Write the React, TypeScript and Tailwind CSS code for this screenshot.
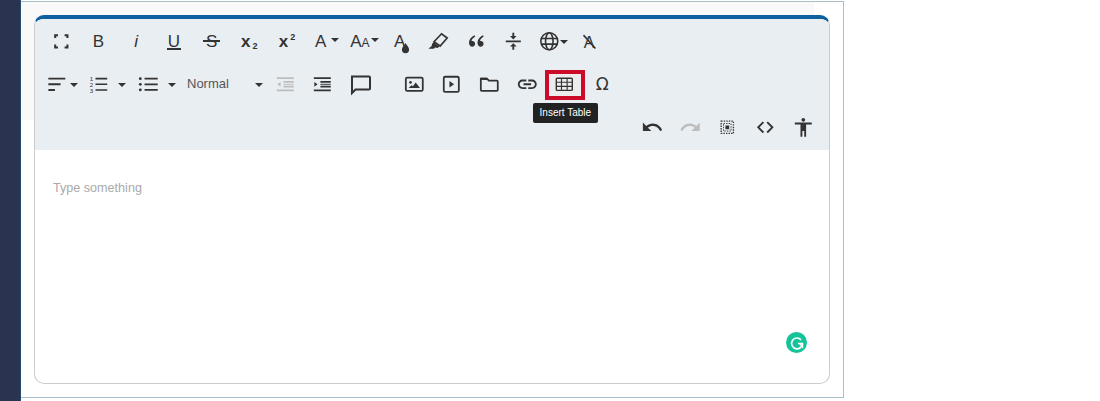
const dark = "#333333";
const off = "#bdbdbd";

function Icon({ children, color = dark }: { children: React.ReactNode; color?: string }) {
  return (
    <svg viewBox="0 0 24 24" fill={color} stroke="none" className="w-[22.6px] h-[22.6px] shrink-0" style={{ color }}>
      {children}
    </svg>
  );
}

function Caret({ className = "" }: { className?: string }) {
  return (
    <svg viewBox="0 0 8 4" fill="#333333" className={"w-[8px] h-[4px] shrink-0 " + className}>
      <path d="M0 0h8L4 4z" />
    </svg>
  );
}

function Btn({ children }: { children: React.ReactNode }) {
  return <div className="w-[37.7px] h-[38px] flex items-center justify-center shrink-0 text-[#333]">{children}</div>;
}

function Lines({ d, color = dark, width = 1.8 }: { d: string; color?: string; width?: number }) {
  return <path d={d} fill="none" stroke={color} strokeWidth={width} />;
}

function IndentIcon({ color, out }: { color: string; out?: boolean }) {
  return (
    <Icon color={color}>
      <Lines color={color} d="M3 5.5h18M10 9.5h11M10 14.5h11M3 18.5h18" />
      <Lines color={color} width={1} d="M10 12h11" />
      <path d={out ? "M7 9.5v5L3.5 12z" : "M3.5 9.5v5L7 12z"} fill={color} />
    </Icon>
  );
}

export default function App() {
  return (
    <div className="flex h-[401px] w-[1100px] bg-white overflow-hidden font-['Liberation_Sans',Arial,sans-serif]">
      <div className="w-[21px] h-full bg-[#2a3350] border-r border-[#284a6e]" />
      <div className="pt-px">
        <div className="relative w-[823px] h-[397px] border border-l-0 border-[#a9bfce] pl-[13px] pt-[13px] bg-[linear-gradient(#f9f9f9,#f9f9f9)] bg-no-repeat bg-[length:793px_118px]">
          <div className="w-[796px] h-[369px] rounded-[10px] border-x border-b border-[#cccccc] bg-white overflow-hidden border-t-4 border-t-[#0e619f] flex flex-col">
            <div className="h-[131px] bg-[#e9eef2] shrink-0 pt-[1px]">
              {/* row 1 */}
              <div className="h-[43px] flex items-center pl-[7px]">
                <Btn>
                  <Icon>
                    <Lines width={2.2} d="M5.5 8.5v-3h3M15.5 5.5h3v3M18.5 15.500v3h-3M8.500 18.500h-3v-3" />
                  </Icon>
                </Btn>
                <Btn><span className="text-[17px] leading-none">B</span></Btn>
                <Btn><span className="text-[17px] leading-none italic">i</span></Btn>
                <Btn>
                  <span className="text-[17px] leading-[15px] h-[16px] border-b-2 border-[#333] px-px">U</span>
                </Btn>
                <Btn>
                  <div className="relative w-[17px] h-[17px] flex items-center justify-center">
                    <span className="text-[17px] leading-none">S</span>
                    <div className="absolute left-0 right-0 top-[7px] h-[2px] bg-[#333]" />
                  </div>
                </Btn>
                <Btn>
                  <span className="text-[17px] leading-none font-bold">x</span>
                  <span className="text-[9px] font-bold leading-none mt-[9px] ml-[2px]">2</span>
                </Btn>
                <Btn>
                  <span className="text-[17px] leading-none font-bold">x</span>
                  <span className="text-[9px] font-bold leading-none mb-[9px] ml-[2px]">2</span>
                </Btn>
                <Btn>
                  <span className="text-[17px] leading-none ml-[5px]">A</span>
                  <Caret className="ml-[5px] mb-[3px]" />
                </Btn>
                <Btn>
                  <span className="text-[17px] leading-none ml-[4px]">A</span>
                  <span className="text-[12px] leading-none mt-[3px]">A</span>
                  <Caret className="ml-px mb-[3px] w-[6px]" />
                </Btn>
                <Btn>
                  <div className="relative w-[22px] h-[22px] flex items-center">
                    <span className="text-[17px] leading-none ml-[5px]">A</span>
                    <svg viewBox="0 0 10 12" fill="#333333" className="absolute left-[12px] top-[12px] w-[9px] h-[11px]">
                      <path d="M5 0c1 2 4 4.500 4 7.200A4 4 0 0 1 1 7.200C1 4.500 4 2 5 0z" />
                    </svg>
                  </div>
                </Btn>
                <Btn>
                  <Icon>
                    <Lines width={1.800} d="M8.500 12.500 16.500 4l6 4.500-7.500 8.500z" />
                    <path d="M8 13l6 4.500-1.500 1.500-3-.5-1 1.500H2.500l3.500-3 .5-2.500z" />
                  </Icon>
                </Btn>
                <Btn>
                  <Icon>
                    <path d="M11 5.500 12 7c-2 1.200-3.600 2.600-4 4.800.4-.1.700-.1 1-.1 1.500 0 2.800 1.200 2.800 2.900 0 1.800-1.300 3.100-3 3.100-2.200 0-3.500-1.700-3.500-4.200 0-3.400 2.200-6.100 5.700-8zM20 5.500 21 7c-2 1.200-3.600 2.600-4 4.800.4-.1.700-.1 1-.1 1.500 0 2.800 1.200 2.800 2.900 0 1.800-1.300 3.100-3 3.100-2.200 0-3.500-1.700-3.500-4.200 0-3.400 2.200-6.100 5.700-8z" />
                  </Icon>
                </Btn>
                <Btn>
                  <Icon>
                    <Lines width={1.800} d="M4 12h16" />
                    <path d="M11 3h2v3.500h2.500L12 10 8.500 6.500H11zM12 14l3.500 3.500H13V21h-2v-3.500H8.500z" />
                  </Icon>
                </Btn>
                <Btn>
                  <div className="flex items-center ml-[4px]">
                    <Icon>
                      <g fill="none" stroke="#333333" strokeWidth="1.700">
                        <circle cx="12" cy="12" r="9" />
                        <ellipse cx="12" cy="12" rx="4" ry="9" />
                        <path d="M3.500 9h17M3.500 15h17" />
                      </g>
                    </Icon>
                    <Caret className="-ml-[1px] w-[7px]" />
                  </div>
                </Btn>
                <Btn>
                  <div className="relative w-[22px] h-[22px] flex items-center justify-center ml-[1px]">
                    <span className="text-[16px] leading-none mt-[3px]">A</span>
                    <svg viewBox="0 0 24 24" className="absolute inset-0 w-[22px] h-[22px]">
                      <Lines width={1.700} d="M6 4.500 19 19" />
                    </svg>
                  </div>
                </Btn>
              </div>
              {/* row 2 */}
              <div className="h-[43px] flex items-center pl-[7px]">
                <div className="w-[42px] flex items-center pl-[4px] shrink-0">
                  <Icon>
                    <Lines width={2} d="M2.500 6h18M2.500 12h13M2.500 18h7" />
                  </Icon>
                  <Caret className="ml-[1.500px] w-[7px]" />
                </div>
                <div className="w-[48px] flex items-center pl-[3px] shrink-0">
                  <Icon>
                    <Lines width={1.700} d="M9 6h12.500M9 12h12.500M9 18h12.500" />
                    <g fill="#333333" fontSize="6.500" fontFamily="Liberation Sans">
                      <text x="3" y="8">1</text>
                      <text x="3" y="14.500">2</text>
                      <text x="3" y="21">3</text>
                    </g>
                  </Icon>
                  <Caret className="ml-[8px]" />
                </div>
                <div className="w-[48px] flex items-center pl-[5px] shrink-0">
                  <Icon>
                    <Lines width={1.900} d="M8 6h14M8 12h14M8 18h14" />
                    <circle cx="3.500" cy="6" r="1.500" />
                    <circle cx="3.500" cy="12" r="1.500" />
                    <circle cx="3.500" cy="18" r="1.500" />
                  </Icon>
                  <Caret className="ml-[8px]" />
                </div>
                <div className="w-[86px] flex items-center justify-between pl-[7px] pr-[3px] shrink-0">
                  <span className="text-[13px] leading-none text-[#555] mb-[2px]">Normal</span>
                  <Caret />
                </div>
                <Btn><IndentIcon color={off} out /></Btn>
                <Btn><IndentIcon color={dark} /></Btn>
                <Btn>
                  <svg viewBox="0 0 24 24" className="w-[24px] h-[24px]">
                    <Lines width={2} d="M4 3.500h17a1 1 0 0 1 1 1v11a1 1 0 0 1-1 1H7.500L4 20z" />
                  </svg>
                </Btn>
                <div className="w-[16px] shrink-0" />
                <Btn>
                  <Icon>
                    <rect x="3" y="5" width="18" height="14" rx="1.500" fill="none" stroke="#333333" strokeWidth="1.900" />
                    <circle cx="8" cy="10" r="1.400" />
                    <path d="M6 16l3-3 1.500 1 3-4 4.500 6z" />
                  </Icon>
                </Btn>
                <Btn>
                  <Icon>
                    <rect x="4" y="4" width="16" height="16" rx="1.500" fill="none" stroke="#333333" strokeWidth="1.900" />
                    <path d="M10 8.500v7l5-3.500z" />
                  </Icon>
                </Btn>
                <Btn>
                  <Icon>
                    <Lines width={1.900} d="M3 6h6.500l2 2H20a1 1 0 0 1 1 1v9a1 1 0 0 1-1 1H4a1 1 0 0 1-1-1z" />
                    <path d="M3 5h6.500l2 2.500H3z" />
                  </Icon>
                </Btn>
                <Btn>
                  <Icon>
                    <path d="M3.900 12c0-1.710 1.390-3.100 3.100-3.100h4V7H7c-2.760 0-5 2.240-5 5s2.240 5 5 5h4v-1.900H7c-1.710 0-3.100-1.390-3.100-3.100zM8 13h8v-2H8v2zm9-6h-4v1.900h4c1.710 0 3.100 1.390 3.100 3.100s-1.390 3.100-3.100 3.100h-4V17h4c2.760 0 5-2.240 5-5s-2.240-5-5-5z" />
                  </Icon>
                </Btn>
                <div className="relative w-[37.700px] h-[38px] flex items-center justify-center shrink-0">
                  <div className="w-[40px] h-[30px] shrink-0 border-[4px] border-[#cc0b2b] bg-[#ececec] flex items-center justify-center">
                    <Icon>
                      <rect x="3.500" y="5.500" width="17" height="13" rx="1" fill="none" stroke="#333333" strokeWidth="1.500" />
                      <Lines width={1.200} d="M3.500 9.800h17M3.500 14.200h17M9 5.500v13M15 5.500v13" />
                    </Icon>
                  </div>
                  <div className="absolute left-[-13px] top-[37px] w-[65px] h-[20px] rounded-[2px] bg-[#222222] text-white text-[10px] leading-none flex items-center justify-center whitespace-nowrap z-10">
                    Insert Table
                  </div>
                </div>
                <Btn><span className="text-[17px] leading-none font-['DejaVu_Sans',sans-serif]">Ω</span></Btn>
              </div>
              {/* row 3 */}
              <div className="h-[43px] flex items-center justify-end pr-[7px]">
                <Btn>
                  <Icon>
                    <path d="M12.500 8c-2.650 0-5.050.99-6.900 2.600L2 7v9h9l-3.620-3.620c1.390-1.160 3.160-1.880 5.120-1.880 3.540 0 6.550 2.310 7.600 5.500l2.370-.78C21.080 11.030 17.150 8 12.500 8z" />
                  </Icon>
                </Btn>
                <Btn>
                  <Icon color={off}>
                    <path d="M18.400 10.600C16.550 8.990 14.150 8 11.500 8c-4.650 0-8.580 3.030-9.960 7.220L3.900 16c1.050-3.190 4.050-5.500 7.600-5.500 1.950 0 3.730.72 5.120 1.880L13 16h9V7l-3.600 3.600z" />
                  </Icon>
                </Btn>
                <Btn>
                  <Icon>
                    <path d="M10 10h4v4h-4z" />
                    <rect x="5.500" y="5.500" width="13" height="13" fill="none" stroke="#333333" strokeWidth="1.400" strokeDasharray="1.500 1.200" />
                    <rect x="8" y="8" width="8" height="8" fill="none" stroke="#333333" strokeWidth="1" strokeDasharray="1.500 1.200" />
                  </Icon>
                </Btn>
                <Btn>
                  <Icon>
                    <Lines width={2} d="M10 6.500 4.500 12l5.500 5.500M14 6.500l5.500 5.500-5.500 5.500" />
                  </Icon>
                </Btn>
                <Btn>
                  <Icon>
                    <path d="M12 2c1.100 0 2 .9 2 2s-.9 2-2 2-2-.9-2-2 .9-2 2-2zm9 7h-6v13h-2v-6h-2v6H9V9H3V7h18v2z" />
                  </Icon>
                </Btn>
              </div>
            </div>
            <div className="pl-[18px] pt-[31px] text-[12.600px] leading-[15px] text-[#a9a9a9]">Type something</div>
          </div>
          <div className="absolute left-[765px] top-[330px] w-[21px] h-[21px] rounded-full bg-[#15c39a] flex items-center justify-center">
            <svg viewBox="0 0 20 20" className="w-[18px] h-[18px]">
              <path d="M14.500 6.500A6 6 0 1 0 16 10.500h-5M13 10.500l3 3.500v-3.500" fill="none" stroke="#ffffff" strokeWidth="1.800" />
            </svg>
          </div>
        </div>
      </div>
    </div>
  );
}
